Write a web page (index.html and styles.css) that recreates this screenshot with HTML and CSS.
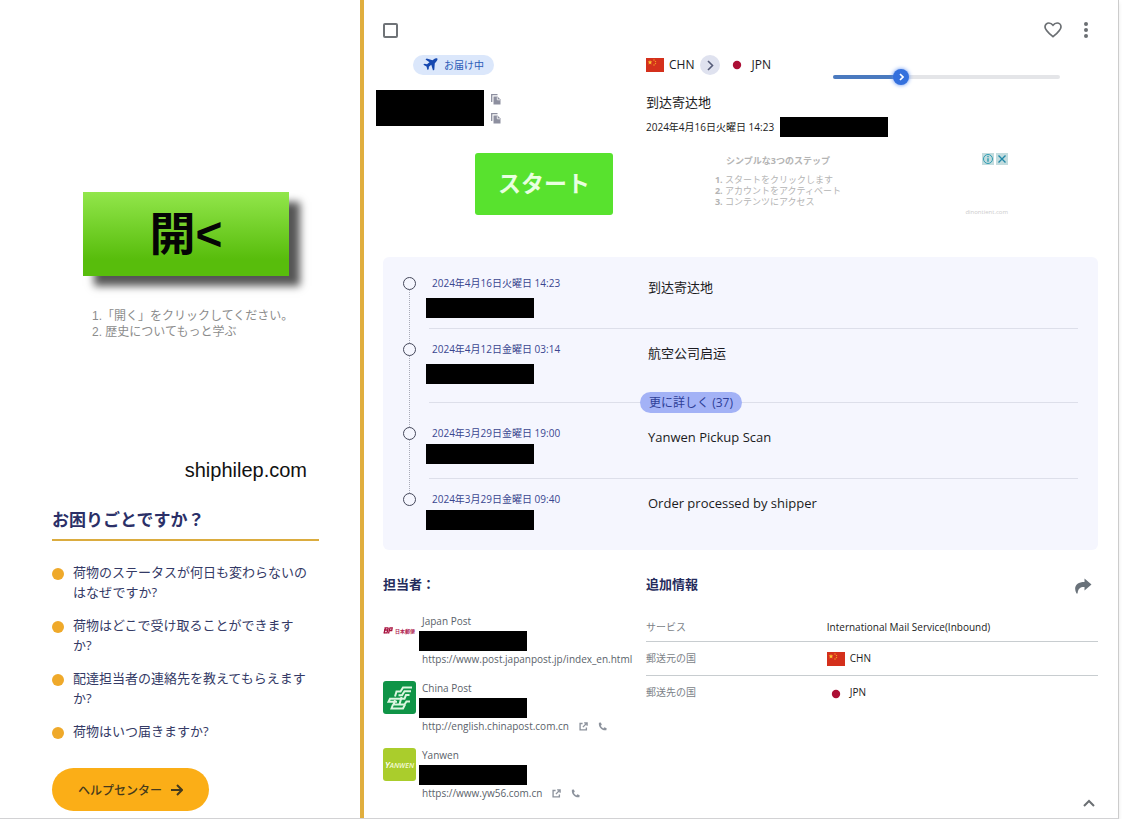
FILE: index.html
```
<!DOCTYPE html>
<html lang="ja">
<head>
  <meta charset="utf-8">
  <title>荷物の追跡</title>
  <meta name="viewport" content="width=device-width, initial-scale=1">
  <link rel="stylesheet" href="styles.css">
</head>
<body>
  <svg width="0" height="0" class="defs">
    <symbol id="flag-cn" viewBox="0 0 18 14">
      <rect width="18" height="14" fill="#d4301c"/>
      <path d="M4 2l.6 1.6h1.7L5 4.7l.5 1.7L4 5.4 2.500 6.400 3 4.700 1.700 3.600h1.700z" fill="#fbc531"/>
      <circle cx="8" cy="2" r=".7" fill="#f6a821"/><circle cx="9.500" cy="3.600" r=".7" fill="#f6a821"/>
      <circle cx="9.500" cy="5.600" r=".7" fill="#f6a821"/><circle cx="8" cy="7" r=".7" fill="#f6a821"/>
    </symbol>
    <symbol id="flag-jp" viewBox="0 0 18 14">
      <circle cx="9" cy="7" r="4.200" fill="#ac0f35"/>
    </symbol>
    <symbol id="copy" viewBox="0 0 10 11">
      <path d="M.7 8V.7H6.500" fill="none" stroke="#8d8f9f" stroke-width="1.300"/>
      <path d="M2.500 2.500H6.500L9.500 5.500V10.500H2.500z" fill="#8d8f9f"/>
      <path d="M6.300 3.200V5.800H9" fill="none" stroke="#fff" stroke-width=".8"/>
    </symbol>
    <symbol id="external" viewBox="0 0 10 10">
      <path d="M4 1.700H1.200V8.800H8.200V6M5.700 1H9V4.300M8.800 1.200L4.300 5.700" fill="none" stroke="#8c929c" stroke-width="1.500"/>
    </symbol>
    <symbol id="phone" viewBox="0 0 10 10">
      <path d="M1 .8L3.200.5 4.200 3 3 4.200C3.600 5.500 4.600 6.500 5.900 7.100L7.100 5.900 9.600 6.900 9.300 9.200C4.500 10 .3 5.800 1 .8z" fill="#8c929c"/>
    </symbol>
  </svg>

  <div class="page">
    <aside class="sidebar">
      <div class="side-ad">
        <button class="open-btn">開&lt;</button>
        <p class="side-steps">1.「開く」をクリックしてください。<br>2. 歴史についてもっと学ぶ</p>
        <a class="side-site" href="#">shiphilep.com</a>
      </div>
      <h2 class="help-title">お困りごとですか？</h2>
      <ul class="faq">
        <li><a href="#">荷物のステータスが何日も変わらないのはなぜですか?</a></li>
        <li><a href="#">荷物はどこで受け取ることができますか?</a></li>
        <li><a href="#">配達担当者の連絡先を教えてもらえますか?</a></li>
        <li><a href="#">荷物はいつ届きますか?</a></li>
      </ul>
      <button class="help-btn">ヘルプセンター
        <svg width="12" height="12" viewBox="0 0 12 12"><path d="M0 6H11M6 1L11 6 6 11" fill="none" stroke="#453a1c" stroke-width="2"/></svg>
      </button>
    </aside>

    <main class="main">
      <div class="toolbar">
        <input type="checkbox" class="select" aria-label="選択">
        <button class="icon-btn" aria-label="お気に入り">
          <svg width="18" height="16" viewBox="0 0 18 16"><path d="M9 14.700C4.500 10.800 1 8 1 4.900 1 2.600 2.800 1 4.900 1 6.700 1 8 1.900 9 3.200 10 1.900 11.300 1 13.100 1 15.200 1 17 2.600 17 4.900 17 8 13.500 10.800 9 14.700z" fill="none" stroke="#6b6f73" stroke-width="1.700"/></svg>
        </button>
        <button class="icon-btn" aria-label="メニュー">
          <svg width="4" height="16" viewBox="0 0 4 16" fill="#6b6f73"><circle cx="2" cy="2" r="2"/><circle cx="2" cy="8" r="2"/><circle cx="2" cy="14" r="2"/></svg>
        </button>
      </div>

      <section class="summary">
        <div>
          <span class="status">
            <svg width="15" height="14" viewBox="0 0 15 14"><path d="M14.300.6C13.300-.1 12 .3 11.200 1L9.500 2.200 3.700.6 2.500 1.500 6.500 4.300 4 6.300 1.500 5.700.3 6.700 3.500 8.500 4.500 12 5.700 11.200 5.900 8.700 8.300 6.800 10 12.600 11.300 11.800 11.800 5.200 13.200 3.700C14 2.800 14.900 1.500 14.300.6z" fill="#1648b0"/></svg>
            お届け中
          </span>
          <div class="codes">
            <span class="redacted redacted-tall"></span>
            <div class="copies">
              <button class="icon-btn" aria-label="コピー"><svg width="10" height="11"><use href="#copy"/></svg></button>
              <button class="icon-btn" aria-label="コピー"><svg width="10" height="11"><use href="#copy"/></svg></button>
            </div>
          </div>
        </div>
        <div>
          <div class="route">
            <svg width="18" height="14"><use href="#flag-cn"/></svg>
            <b>CHN</b>
            <span class="route-arrow"><svg width="7" height="11" viewBox="0 0 7 11"><path d="M1 1L5.500 5.500 1 10" fill="none" stroke="#555b78" stroke-width="1.600"/></svg></span>
            <svg width="18" height="14"><use href="#flag-jp"/></svg>
            <b>JPN</b>
            <div class="progress">
              <div class="progress-fill" style="width: 30%"><span class="progress-knob"><svg width="5" height="8" viewBox="0 0 5 8"><path d="M1 1L4 4 1 7" fill="none" stroke="#fff" stroke-width="1.600"/></svg></span></div>
            </div>
          </div>
          <div class="latest" lang="zh">到达寄达地</div>
          <div class="latest-date">2024年4月16日火曜日 14:23 <span class="redacted"></span></div>
        </div>
      </section>

      <section class="ad">
        <button class="start-btn">スタート</button>
        <div class="ad-text">
          <b class="ad-title">シンプルな3つのステップ</b>
          <ol>
            <li>スタートをクリックします</li>
            <li>アカウントをアクティベート</li>
            <li>コンテンツにアクセス</li>
          </ol>
        </div>
        <div class="ad-side">
          <div class="ad-choices">
            <button aria-label="広告情報"><svg width="12" height="12" viewBox="0 0 12 12"><circle cx="6" cy="6" r="4.500" fill="none" stroke="#2e9cb2"/><path d="M6 5.200V8.800M6 3V4.200" stroke="#2e9cb2" stroke-width="1.400"/></svg></button>
            <button aria-label="閉じる"><svg width="12" height="12" viewBox="0 0 12 12"><path d="M2.500 2.500L9.500 9.500M9.500 2.500L2.500 9.500" stroke="#2188a8" stroke-width="1.400"/></svg></button>
          </div>
          <a class="ad-site" href="#">dinontient.com</a>
        </div>
      </section>

      <section class="timeline">
        <ol>
          <li>
            <span class="dot"></span>
            <div class="event">
              <div><time>2024年4月16日火曜日 14:23</time><span class="redacted"></span></div>
              <p lang="zh">到达寄达地</p>
            </div>
          </li>
          <li class="before-more">
            <span class="dot"></span>
            <div class="event">
              <div><time>2024年4月12日金曜日 03:14</time><span class="redacted"></span></div>
              <p lang="zh">航空公司启运</p>
            </div>
          </li>
          <li class="more"><button>更に詳しく (37)</button></li>
          <li>
            <span class="dot"></span>
            <div class="event">
              <div><time>2024年3月29日金曜日 19:00</time><span class="redacted"></span></div>
              <p>Yanwen Pickup Scan</p>
            </div>
          </li>
          <li class="last">
            <span class="dot"></span>
            <div class="event">
              <div><time>2024年3月29日金曜日 09:40</time><span class="redacted"></span></div>
              <p>Order processed by shipper</p>
            </div>
          </li>
        </ol>
      </section>

      <section class="details">
        <div>
          <h3>担当者：</h3>
          <ul class="carriers">
            <li>
              <span class="logo logo-jp">
                <svg width="10" height="7" viewBox="0 0 10 7"><path d="M1.500.8H5.500M1 3H4.500M.5 5.800H3.500M2.500.5L1 6.500M5.300.8L3.800 6.500M5.500 6.500L7 .8H9.200L8.700 3.500H6.500" fill="none" stroke="#a8123f" stroke-width="1.300"/></svg>
                日本郵便
              </span>
              <div>
                <div class="name">Japan Post</div>
                <span class="redacted"></span>
                <div class="links"><a href="#">https://www.post.japanpost.jp/index_en.html</a></div>
              </div>
            </li>
            <li>
              <svg class="logo" viewBox="0 0 33 33">
                <rect width="33" height="33" fill="#0f9447"/>
                <g fill="none" stroke="#dcf5e0" stroke-width="2">
                  <path d="M29 6.500H20L17.500 10.500H13.500L12 15.500"/>
                  <path d="M28 10.200H21.500L19 14.200H15.500"/>
                  <path d="M26.500 14H23L21.500 17.700H7L5.500 20.700H14"/>
                  <path d="M12 19L10.500 23.500H21.500L23.500 20.500H27"/>
                  <path d="M18.500 16L16.500 23.500M10 23.500L8.500 27.500H20L22 23.500"/>
                </g>
              </svg>
              <div>
                <div class="name">China Post</div>
                <span class="redacted"></span>
                <div class="links"><a href="#">http://english.chinapost.com.cn</a><svg width="9" height="9"><use href="#external"/></svg><svg width="9" height="9"><use href="#phone"/></svg></div>
              </div>
            </li>
            <li>
              <span class="logo logo-yw"><span>Y</span>ANWEN</span>
              <div>
                <div class="name">Yanwen</div>
                <span class="redacted"></span>
                <div class="links"><a href="#">https://www.yw56.com.cn</a><svg width="9" height="9"><use href="#external"/></svg><svg width="9" height="9"><use href="#phone"/></svg></div>
              </div>
            </li>
          </ul>
        </div>
        <div class="info">
          <div class="info-head">
            <h3>追加情報</h3>
            <button class="icon-btn" aria-label="共有">
              <svg width="18" height="16" viewBox="0 0 18 16"><path d="M10.500.5L17.500 6.500 10.500 12.500V9C6.500 8.800 4 10.500 3.600 15.500H2.500C-1 9 2.500 4 10.500 4z" fill="#69727a"/></svg>
            </button>
          </div>
          <table>
            <tr><th>サービス</th><td>International Mail Service(Inbound)</td></tr>
            <tr><th>郵送元の国</th><td><svg width="18" height="14"><use href="#flag-cn"/></svg>CHN</td></tr>
            <tr><th>郵送先の国</th><td><svg width="18" height="14"><use href="#flag-jp"/></svg>JPN</td></tr>
          </table>
          <button class="icon-btn collapse" aria-label="閉じる">
            <svg width="12" height="8" viewBox="0 0 12 8"><path d="M1 7L6 2 11 7" fill="none" stroke="#6b6f73" stroke-width="2"/></svg>
          </button>
        </div>
      </section>
    </main>
  </div>
</body>
</html>
```
FILE: styles.css
```
* { box-sizing: border-box; }
body {
  margin: 0;
  background: #fff;
  color: #1b1b22;
  font: 10px/20px "Open Sans", "Noto Sans CJK JP", sans-serif;
}
h2, h3, p, ul, ol { margin: 0; padding: 0; }
ul, ol { list-style: none; }
a { color: inherit; text-decoration: none; }
button { font-family: inherit; border: none; padding: 0; cursor: pointer; }
svg { display: block; flex: none; }
[lang="zh"] { font-family: "Open Sans", "Noto Sans CJK SC", sans-serif; }
.defs { position: absolute; }

.page {
  display: flex;
  margin-right: 3px;
  border-right: 1px solid #ccc;
  border-bottom: 1px solid #d2d2d4;
  box-shadow: 0 3px 4px #00000018;
}
.icon-btn { display: flex; background: none; }
.redacted { display: block; width: 108px; height: 20px; background: #000; }

/* sidebar */
.sidebar {
  flex: none;
  width: 364px;
  padding: 192px 41px 7px 52px;
  border-right: 4px solid #e0ae3e;
}
.side-ad { display: flex; flex-direction: column; padding: 0 12px 0 31px; }
.open-btn {
  width: 206px;
  height: 84px;
  background: linear-gradient(#92e64b, #58bd0c 80%);
  box-shadow: 11px 10px 8px #000000aa;
  color: #050505;
  font: bold 46px/84px "Liberation Sans", "Noto Sans CJK JP", sans-serif;
}
.side-steps {
  margin: 32px 0 0 9px;
  color: #8c8c8c;
  font: 12px/16px "Liberation Sans", "Noto Sans CJK JP", sans-serif;
}
.side-site {
  align-self: flex-end;
  margin-top: 118px;
  color: #111;
  font: 20px/24px "Liberation Sans", sans-serif;
}
.help-title {
  margin-top: 26px;
  padding-bottom: 7px;
  border-bottom: 2px solid #dbac3f;
  color: #2b3068;
  font-size: 17px;
  line-height: 24px;
}
.faq {
  display: flex;
  flex-direction: column;
  gap: 13px;
  margin-top: 21px;
  padding-right: 8px;
  color: #343a66;
  font-size: 13px;
}
.faq li { display: flex; gap: 9px; }
.faq li::before {
  content: "";
  flex: none;
  width: 12px;
  height: 12px;
  margin-top: 6px;
  border-radius: 50%;
  background: #efa92a;
}
.help-btn {
  display: flex;
  align-items: center;
  justify-content: center;
  gap: 9px;
  width: 157px;
  height: 43px;
  margin-top: 27px;
  border-radius: 22px;
  background: #fbae17;
  color: #453a1c;
  font-size: 12px;
  font-weight: 500;
}

/* main column */
.main {
  flex: 1;
  display: flex;
  flex-direction: column;
  padding: 20px 20px 8px 19px;
}
.toolbar { display: flex; align-items: center; gap: 22px; height: 20px; padding-right: 10px; }
.select {
  appearance: none;
  width: 15px;
  height: 15px;
  margin: 0 auto 0 0;
  border: 2px solid #6f7377;
  border-radius: 2px;
}

.summary, .details { display: grid; grid-template-columns: 263px 1fr; }
.summary { margin-top: 15px; }
.status {
  display: flex;
  align-items: center;
  gap: 6px;
  width: 81px;
  height: 20px;
  margin-left: 30px;
  padding-left: 10px;
  border-radius: 10px;
  background: #dbe7fb;
  color: #2b5cb8;
}
.codes { display: flex; gap: 7px; margin: 15px 0 0 -7px; }
.redacted-tall { height: 36px; }
.copies { display: flex; flex-direction: column; gap: 8px; padding-top: 4px; }
.route { display: flex; align-items: center; font-size: 12px; }
.route b { margin: 0 6px 0 5px; font-weight: 500; }
.route-arrow {
  display: flex;
  align-items: center;
  justify-content: center;
  width: 20px;
  height: 20px;
  margin-right: 8px;
  border-radius: 50%;
  background: #dfe2ef;
}
.progress {
  align-self: flex-end;
  width: 227px;
  height: 4px;
  margin: 0 38px -4px auto;
  border-radius: 2px;
  background: #e4e5e8;
}
.progress-fill { position: relative; height: 4px; border-radius: 2px; background: #4a7abf; }
.progress-knob {
  position: absolute;
  top: -6px;
  right: -8px;
  display: flex;
  align-items: center;
  justify-content: center;
  width: 16px;
  height: 16px;
  border-radius: 50%;
  background: #3470dd;
  box-shadow: 0 0 4px #5b8df0;
}
.latest { margin-top: 17px; font-size: 13px; }
.latest-date { display: flex; align-items: center; gap: 6px; margin-top: 5px; }

.ad { display: flex; margin-top: 16px; padding: 0 90px 0 92px; color: #b4b4b4; }
.start-btn {
  width: 138px;
  height: 62px;
  padding-bottom: 4px;
  border-radius: 3px;
  background: #58e22e;
  color: #e9ffe0;
  font-size: 23px;
  font-weight: bold;
}
.ad-text { margin-left: 101px; font-size: 9px; line-height: 11px; }
.ad-title { display: block; margin: 2px 0 8px 12px; }
.ad-text ol { padding-left: 11px; list-style: decimal; }
.ad-text li::marker { font-weight: bold; }
.ad-side { display: flex; flex-direction: column; justify-content: space-between; align-items: flex-end; margin-left: auto; }
.ad-choices { display: flex; gap: 2px; }
.ad-choices button { background: #c3dcde; }
.ad-site { color: #ccc; font-size: 6px; line-height: 6px; }

/* timeline */
.timeline {
  margin-top: 42px;
  padding: 6px 20px 16px;
  border-radius: 6px;
  background: #f5f6fe;
}
.timeline ol { position: relative; }
.timeline ol::before {
  content: "";
  position: absolute;
  top: 20px;
  bottom: 35px;
  left: 6px;
  border-left: 1px dotted #a9abb8;
}
.timeline li { display: flex; }
.dot {
  position: relative;
  flex: none;
  width: 13px;
  height: 13px;
  margin: 14px 13px 0 0;
  border: 1px solid #44475a;
  border-radius: 50%;
  background: #f5f6fe;
}
.event {
  flex: 1;
  display: grid;
  grid-template-columns: 216px 1fr;
  padding: 10px 0 10px 3px;
  border-bottom: 1px solid #dddfea;
}
.event time { display: block; color: #3a4690; }
.event .redacted { margin: 5px 0 0 -6px; }
.event p { font-size: 13px; line-height: 28px; }
.before-more .event, .last .event { padding-bottom: 0; border-bottom: none; }
.more ~ li .redacted { margin-top: 1px; margin-bottom: 4px; }
.more { align-items: center; margin-top: 8px; padding-left: 26px; }
.more::before, .more::after { content: ""; height: 1px; background: #dddfea; }
.more::before { width: 211px; }
.more::after { flex: 1; }
.more button {
  width: 102px;
  height: 21px;
  border-radius: 11px;
  background: #a3b2f6;
  color: #2f3f98;
  font-size: 12px;
  line-height: 20px;
}

/* carriers and extra info */
.details { flex: 1; margin-top: 24px; }
h3 { color: #252c5c; font-size: 13px; line-height: 20px; }
.carriers { display: flex; flex-direction: column; gap: 15px; margin-top: 20px; }
.carriers li { display: flex; gap: 6px; }
.logo {
  flex: none;
  width: 33px;
  height: 33px;
  border-radius: 3px;
  text-align: center;
  white-space: nowrap;
}
.logo-jp { display: flex; align-items: center; gap: 2px; color: #b02350; font-size: 5px; font-weight: bold; }
.logo-yw { background: #aacd2c; color: #f4fbd8; font-size: 7px; font-style: italic; font-weight: 600; line-height: 33px; }
.logo-yw span { color: #fff; font-size: 9px; }
.name, .links { color: #5a5f6a; line-height: 14px; }
.name { font-weight: 500; }
.carriers .redacted { margin: 3px 0 1px -3px; }
.links { display: flex; align-items: center; gap: 10px; }

.info { display: flex; flex-direction: column; }
.info-head { display: flex; justify-content: space-between; align-items: center; padding-right: 6px; }
.info-head .icon-btn { padding-top: 4px; }
.info table { margin-top: 19px; border-collapse: collapse; }
.info th, .info td { height: 34px; padding: 0; border-bottom: 1px solid #c8cdd0; }
.info tr:first-child th, .info tr:first-child td { height: 28px; }
.info tr:last-child th, .info tr:last-child td { border-bottom: none; }
.info th { width: 40%; color: #7b7f87; font-weight: normal; text-align: left; }
.info td svg { display: inline-block; margin-right: 5px; vertical-align: middle; }
.collapse { margin: auto 3px 3px auto; }
```
